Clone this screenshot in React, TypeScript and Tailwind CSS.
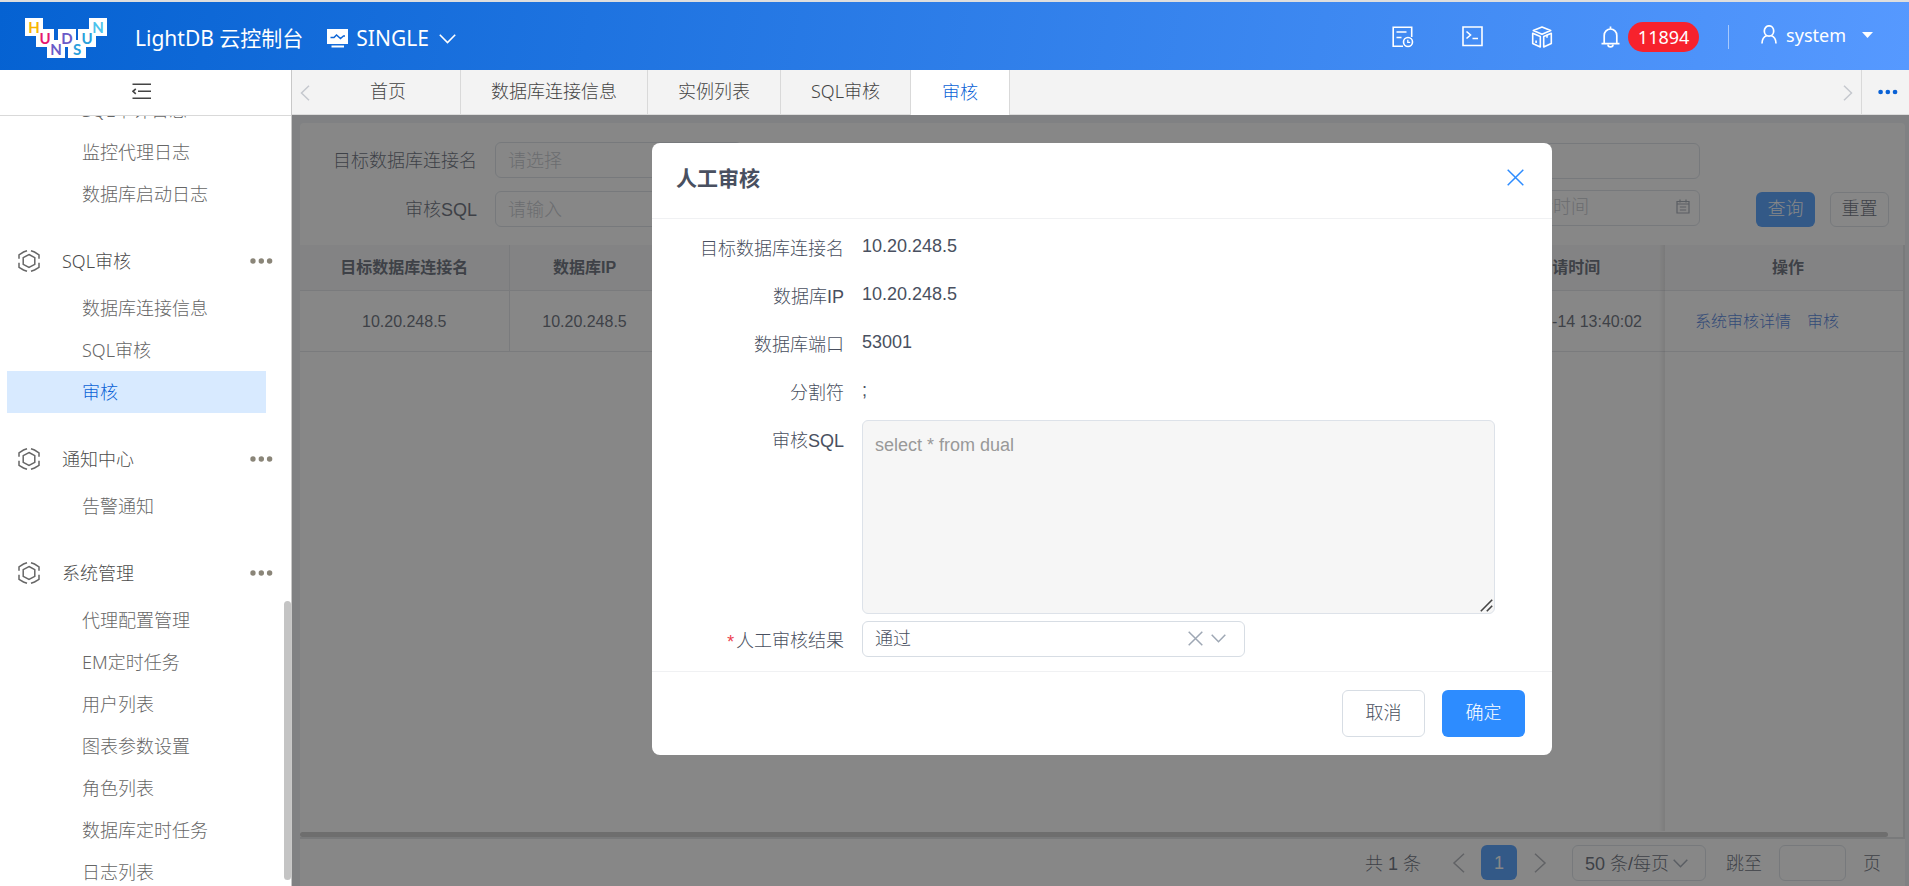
import { useState } from 'react'

const menuGroups = [
  {
    title: '',
    items: ['SQL审计日志', '监控代理日志', '数据库启动日志'],
  },
  {
    title: 'SQL审核',
    items: ['数据库连接信息', 'SQL审核', '审核'],
  },
  {
    title: '通知中心',
    items: ['告警通知'],
  },
  {
    title: '系统管理',
    items: ['代理配置管理', 'EM定时任务', '用户列表', '图表参数设置', '角色列表', '数据库定时任务', '日志列表'],
  },
]

const tabs = ['数据库连接信息', '实例列表', 'SQL审核']

const details = [
  { label: '目标数据库连接名', value: '10.20.248.5' },
  { label: '数据库IP', value: '10.20.248.5' },
  { label: '数据库端口', value: '53001' },
  { label: '分割符', value: ';' },
]

const logoTiles = [
  { x: 0, y: 0, letter: 'H', color: '#f7b500' },
  { x: 11, y: 11, letter: 'U', color: '#e6186e' },
  { x: 22, y: 22, letter: 'N', color: '#6a5ac8' },
  { x: 33, y: 11, letter: 'D', color: '#6a5ac8' },
  { x: 43, y: 22, letter: 'S', color: '#2aa0dc' },
  { x: 53, y: 11, letter: 'U', color: '#2aa0dc' },
  { x: 64, y: 0, letter: 'N', color: '#4cc3ec' },
]

const Logo = () => (
  <svg width="82" height="40" viewBox="0 0 82 40" role="img" aria-label="HUNDSUN">
    {logoTiles.map((tile) => (
      <rect key={tile.x} x={tile.x} y={tile.y} width="18" height="18" fill="#fff" />
    ))}
    {logoTiles.map((tile) => (
      <text
        key={tile.x}
        x={tile.x + 9}
        y={tile.y + 15}
        textAnchor="middle"
        fontSize="15"
        fontWeight="700"
        fontFamily="Lato, sans-serif"
        fill={tile.color}
      >
        {tile.letter}
      </text>
    ))}
  </svg>
)

const MonitorIcon = () => (
  <svg width="21" height="19" viewBox="0 0 21 19" fill="none">
    <path d="M0 0h21v15H0z" fill="#fff" />
    <path d="M3.500 8.500h3.500l2.500-2.500 4 3.500 3-2.500h1.500" stroke="#0f66d6" strokeWidth="1.500" />
    <path d="M4.500 17.500h12.500" stroke="#fff" strokeWidth="2" />
  </svg>
)

const AuditIcon = () => (
  <svg width="22" height="22" viewBox="0 0 22 22" fill="none" stroke="#fff" strokeWidth="1.600">
    <path d="M11 20.200H1.200V1.200h18.500V11" />
    <path d="M4.500 6h10M4.500 11.500h5" />
    <circle cx="16" cy="16" r="4.500" />
    <path d="M15.800 13.800v2.500h2.400" strokeWidth="1.300" />
  </svg>
)

const TerminalIcon = () => (
  <svg width="21" height="21" viewBox="0 0 21 21" fill="none" stroke="#fff" strokeWidth="1.600">
    <path d="M1 1h19v18.500H1z" />
    <path d="M4.500 5.500l4 3.500-4 3.500M10.500 12.500h5.500" />
  </svg>
)

const CubeIcon = () => (
  <svg width="22" height="22" viewBox="0 0 21 22" fill="none" stroke="#fff" strokeWidth="1.600" strokeLinejoin="round">
    <path d="M10.500 1l8.700 3.600-8.700 3.700-8.700-3.700z" />
    <path d="M1.200 7.200l7.600 3.300V21l-7.600-3.500zM19.800 7.200l-7.600 3.300V21l7.600-3.500z" />
    <path d="M4.600 14.500v2.500M15.500 8.800v3" />
  </svg>
)

const BellIcon = () => (
  <svg width="19" height="22" viewBox="0 0 19 22" fill="none" stroke="#fff" strokeWidth="1.700">
    <path d="M3.200 17.500V9.500a6.300 6.500 0 0 1 12.600 0v8M.5 17.700h18M9.500.5v2.500" />
    <path d="M7 18.500a2.500 2.400 0 0 0 5 0" />
  </svg>
)

const UserIcon = () => (
  <svg width="16" height="19" viewBox="0 0 16 19" fill="none" stroke="#fff" strokeWidth="1.700">
    <ellipse cx="8" cy="6" rx="4.700" ry="5.200" />
    <path d="M1 18.500c0-5 2.200-7 5-8M15 18.500c0-5-2.200-7-5-8" />
  </svg>
)

const GroupIcon = () => (
  <svg width="22" height="22" viewBox="0 0 22 22" fill="none" stroke="#666" strokeWidth="1.500">
    <path d="M11 4.500l5.800 3.200v6.600L11 17.500l-5.800-3.200V7.700z" />
    <path d="M9 .8L5.500 2 1 4.800v4M13 .8L16.500 2 21 4.800v4M1 12.800v4.500l4.500 2.700 3.500 1.200M21 12.800v4.500l-4.500 2.700-3.500 1.200" />
  </svg>
)

const CollapseIcon = () => (
  <svg width="19" height="17" viewBox="0 0 19 17" fill="none" stroke="#444" strokeWidth="1.600">
    <path d="M.5 1.300H19M6 8.300h13M.5 15.300H19M3.800 5.800L1 8.300l2.800 2.500" />
  </svg>
)

const CalendarIcon = () => (
  <svg width="14" height="15" viewBox="0 0 14 15" fill="none" stroke="#8f98a6" strokeWidth="1.200">
    <path d="M1 2.500h12v11.500H1zM1 5h12M4 .5v3M10 .5v3M3.800 8h6.400M3.800 11h6.400" />
  </svg>
)

const ChevronDownIcon = ({ className }: { className?: string }) => (
  <svg width="15" height="9" viewBox="0 0 15 9" fill="none" stroke="currentColor" strokeWidth="1.500" className={className}>
    <path d="M.7.7l6.800 7L14.300.7" />
  </svg>
)

const Dots = ({ className }: { className: string }) => (
  <svg height="6" viewBox="0 0 23 6" className={className}>
    <circle cx="3" cy="3" r="2.700" />
    <circle cx="11.300" cy="3" r="2.700" />
    <circle cx="19.600" cy="3" r="2.700" />
  </svg>
)

const Header = () => (
  <header className="flex h-[70px] shrink-0 items-center border-t-2 border-[#dedede] bg-[linear-gradient(100deg,#0562d2,#5699ff)] pl-[25px] pr-9 pt-[3px] font-normal text-white">
    <Logo />
    <h1 className="ml-7 pt-[2px] text-[21px]">LightDB 云控制台</h1>
    <button type="button" className="ml-6 flex items-center gap-2 pt-[2px] text-[21px]">
      <MonitorIcon />
      SINGLE
      <svg width="17" height="10" viewBox="0 0 17 10" fill="none" stroke="#fff" strokeWidth="1.600" className="ml-[2px]">
        <path d="M.8.8l7.700 7.700L16.200.8" />
      </svg>
    </button>
    <nav className="ml-auto flex items-center pb-[2px]">
      <div className="flex items-center gap-12">
        <button type="button" aria-label="审核日志">
          <AuditIcon />
        </button>
        <button type="button" aria-label="终端">
          <TerminalIcon />
        </button>
        <button type="button" aria-label="组件">
          <CubeIcon />
        </button>
        <button type="button" className="flex items-center gap-2 text-lg">
          <BellIcon />
          <span className="flex h-[30px] w-[71px] items-center justify-center rounded-full bg-[#f7222d]">11894</span>
        </button>
      </div>
      <span className="ml-[29px] h-6 w-px bg-white/50" />
      <button type="button" className="ml-8 flex items-center pb-1 text-lg">
        <UserIcon />
        <span className="ml-[9px] mr-4">system</span>
        <svg width="11" height="6" viewBox="0 0 11 6" fill="#fff">
          <path d="M0 0h11L5.500 6z" />
        </svg>
      </button>
    </nav>
  </header>
)

const Sidebar = () => (
  <aside className="relative flex w-[292px] shrink-0 flex-col border-r border-[#c8c8c8] bg-white">
    <button
      type="button"
      aria-label="收起菜单"
      className="flex h-[46px] w-full shrink-0 items-center justify-center border-b border-[#d9d9d9] pb-[2px] pr-2"
    >
      <CollapseIcon />
    </button>
    <nav className="flex-1 overflow-hidden">
      {/* list is scrolled a little past its first entry */}
      <div className="-mt-[27px]">
        {menuGroups.map((group) => (
          <section key={group.title}>
            {group.title && (
              <div className="flex h-[72px] items-center pl-[18px] pr-[18px] pt-[20px]">
                <GroupIcon />
                <h2 className="ml-[22px] text-lg text-[#4c4c4c]">{group.title}</h2>
                <Dots className="ml-auto w-[23px] fill-[#8a8578]" />
              </div>
            )}
            <ul>
              {group.items.map((item) => (
                <li key={item} className="pl-[7px] pr-[25px]">
                  <a
                    href="#"
                    className={
                      item === '审核'
                        ? 'flex h-[42px] items-center bg-[#d8eaff] pl-[75px] text-lg text-[#0a62d6]'
                        : 'flex h-[42px] items-center pl-[75px] text-lg text-[#666]'
                    }
                  >
                    {item}
                  </a>
                </li>
              ))}
            </ul>
          </section>
        ))}
      </div>
    </nav>
    <span className="absolute bottom-[6px] right-0 h-[279px] w-[7px] rounded-full bg-[#c4c4c4]" />
  </aside>
)

const TabBar = () => (
  <div className="flex h-[45px] shrink-0 border-b border-[#dcdcdc] bg-[#f3f3f3] text-lg text-[#444]">
    <button type="button" aria-label="上一页标签" className="flex w-6 items-center pl-2 pt-[2px]">
      <svg width="10" height="16" viewBox="0 0 10 16" fill="none" stroke="#c5c8ce" strokeWidth="1.500">
        <path d="M9 .8L1.500 8 9 15.200" />
      </svg>
    </button>
    <a href="#" className="flex items-center border-r border-[#d9d9d9] px-[54px] pb-[2px]">
      首页
    </a>
    {tabs.map((tab) => (
      <a key={tab} href="#" className="flex items-center border-r border-[#d9d9d9] px-[30px] pb-[2px]">
        {tab}
      </a>
    ))}
    <a href="#" className="-mb-px flex items-center border-r border-[#d9d9d9] bg-white px-[31px] pb-[2px] text-[#0a62d6]">
      审核
    </a>
    <button type="button" aria-label="下一页标签" className="ml-auto flex items-center pr-2 pt-[2px]">
      <svg width="10" height="16" viewBox="0 0 10 16" fill="none" stroke="#c5c8ce" strokeWidth="1.500">
        <path d="M1 .8L8.500 8 1 15.200" />
      </svg>
    </button>
    <button
      type="button"
      aria-label="更多"
      className="flex w-[48px] items-center justify-center border-l border-[#d9d9d9] pl-1"
    >
      <Dots className="w-5 fill-[#0a62d6]" />
    </button>
  </div>
)

const SearchForm = () => (
  <form className="flex items-start pl-[20px] pr-4 pt-[19px]">
    <div className="flex w-[422px] flex-col gap-[13px]">
      <div className="flex items-center justify-between">
        <label htmlFor="conn" className="w-[157px] whitespace-nowrap pt-[2px] text-right">
          目标数据库连接名
        </label>
        <input
          id="conn"
          placeholder="请选择"
          className="h-9 w-[247px] rounded-md border border-[#d7dde4] px-3 pt-[2px] placeholder:text-[#b9bdc5]"
        />
      </div>
      <div className="flex items-center justify-between">
        <label htmlFor="sql" className="w-[157px] pt-[2px] text-right">
          审核SQL
        </label>
        <input
          id="sql"
          placeholder="请输入"
          className="h-9 w-[247px] rounded-md border border-[#d7dde4] px-3 pt-[2px] placeholder:text-[#b9bdc5]"
        />
      </div>
    </div>
    <div className="ml-auto flex w-[250px] flex-col gap-[11px]">
      <input aria-label="数据库IP" className="mt-px h-9 rounded-md border border-[#d7dde4] px-3" />
      <div className="relative">
        <input
          aria-label="申请时间"
          placeholder="请选择申请时间"
          className="h-9 w-full rounded-md border border-[#d7dde4] px-3 pb-[2px] placeholder:text-[#b9bdc5]"
        />
        <span className="absolute right-[10px] top-[9px]">
          <CalendarIcon />
        </span>
      </div>
    </div>
    <div className="ml-14 mt-[50px] flex gap-[15px]">
      <button type="button" className="h-[35px] w-[59px] rounded-md bg-[#2d8cff] pb-[2px] text-white">
        查询
      </button>
      <button type="button" className="h-[35px] w-[59px] rounded-md border border-[#d7dde4] pb-px">
        重置
      </button>
    </div>
  </form>
)

const AuditTable = () => (
  <div className="relative mt-[18px] flex flex-1 flex-col border-b-2 border-r-2 border-[#dcdee2]">
    <table className="w-full table-fixed text-center text-base">
      <colgroup>
        <col className="w-[209px]" />
        <col className="w-[151px]" />
        <col />
        <col className="w-[194px]" />
        <col className="w-[238px]" />
      </colgroup>
      <thead>
        <tr className="h-[45px] border-b border-[#dfe1e6] bg-[#f6f6f7]">
          <th className="border-r border-[#dfe1e6] pt-[2px]">目标数据库连接名</th>
          <th className="border-r border-[#dfe1e6] pt-[2px]">数据库IP</th>
          <th className="border-r border-[#dfe1e6] pt-[2px]">数据库端口</th>
          <th className="pt-[2px]">申请时间</th>
          <th className="pl-2 pt-[2px]">操作</th>
        </tr>
      </thead>
      <tbody>
        <tr className="h-[61px] border-b border-[#dfe1e6]">
          <td className="border-r border-[#dfe1e6] pt-[2px]">10.20.248.5</td>
          <td className="border-r border-[#dfe1e6] pt-[2px]">10.20.248.5</td>
          <td className="border-r border-[#dfe1e6] pt-[2px]">53001</td>
          <td className="whitespace-nowrap pt-[2px]">2022-11-14 13:40:02</td>
          <td className="pt-[2px] text-[#2c69d8]">
            <div className="flex gap-4 pl-[30px]">
              <a href="#">系统审核详情</a>
              <a href="#">审核</a>
            </div>
          </td>
        </tr>
      </tbody>
    </table>
    <div className="mt-auto mr-[15px] h-[5px] rounded-full bg-[#c1c1c1]" />
    {/* edge shadow of the pinned action column */}
    <div className="pointer-events-none absolute bottom-[6px] right-[238px] top-0 w-[6px] bg-linear-to-l from-black/10 to-transparent" />
  </div>
)

const Pagination = () => (
  <footer className="flex h-[47px] items-center justify-end pr-6">
    <span className="pt-[2px]">共 1 条</span>
    <button type="button" aria-label="上一页" className="ml-[31px] text-[#a0a4ab]">
      <svg width="13" height="20" viewBox="0 0 13 20" fill="none" stroke="currentColor" strokeWidth="1.500">
        <path d="M12 .8L2 10l10 9.200" />
      </svg>
    </button>
    <button type="button" className="ml-4 mr-[17px] h-[35px] w-9 rounded-md bg-[#2d8cff] text-white">
      1
    </button>
    <button type="button" aria-label="下一页" className="text-[#a0a4ab]">
      <svg width="13" height="20" viewBox="0 0 13 20" fill="none" stroke="currentColor" strokeWidth="1.500">
        <path d="M1 .8L11 10 1 19.200" />
      </svg>
    </button>
    <div className="relative ml-[25px]">
      <select
        aria-label="每页条数"
        className="h-9 w-[134px] appearance-none rounded-md border border-[#d7dde4] pl-3 pt-[2px]"
      >
        <option>50 条/每页</option>
      </select>
      <ChevronDownIcon className="pointer-events-none absolute right-[18px] top-[14px] text-[#8f98a6]" />
    </div>
    <label htmlFor="jump" className="ml-5 pt-[2px]">
      跳至
    </label>
    <input id="jump" className="mx-[17px] h-9 w-[67px] rounded-md border border-[#d7dde4] px-2" />
    <span className="pt-[2px]">页</span>
  </footer>
)

const AuditDialog = ({ onClose }: { onClose: () => void }) => {
  const [result, setResult] = useState('通过')

  return (
    <div className="absolute inset-0 flex items-start justify-center bg-[rgba(55,55,55,0.6)] pl-[3px] pt-7">
      <div role="dialog" aria-label="人工审核" className="w-[900px] rounded-lg bg-white">
        <div className="flex h-[76px] items-center justify-between border-b border-[#f0f1f3] pb-[6px] pl-6 pr-7">
          <h2 className="pt-[3px] text-[21px] font-bold">人工审核</h2>
          <button type="button" aria-label="关闭" onClick={onClose} className="text-[#2d8cff]">
            <svg width="17" height="17" viewBox="0 0 17 17" fill="none" stroke="currentColor" strokeWidth="1.500">
              <path d="M.7.700l15.600 15.600M16.300.7L.7 16.300" />
            </svg>
          </button>
        </div>
        <form className="pb-[14px] pl-6 pr-[57px] pt-[6px]">
          {details.map((row) => (
            <div key={row.label} className="flex h-12 items-center gap-[18px]">
              <span className="w-[168px] text-right">{row.label}</span>
              <span className="pb-[6px]">{row.value}</span>
            </div>
          ))}
          <div className="flex gap-[18px] pt-[3px]">
            <label htmlFor="audit-sql" className="w-[168px] pt-[7px] text-right">
              审核SQL
            </label>
            <div className="relative flex flex-1">
              <textarea
                id="audit-sql"
                readOnly
                defaultValue="select * from dual"
                className="h-[194px] flex-1 resize-none rounded-md border border-[#dde2e9] bg-[#f6f6f6] px-3 py-[10px] text-[#999]"
              />
              <svg
                width="13"
                height="13"
                viewBox="0 0 13 13"
                fill="none"
                stroke="#444"
                strokeWidth="1.600"
                className="pointer-events-none absolute bottom-[2px] right-[2px]"
              >
                <path d="M.8 12.200L12.200.8M6.800 12.200l5.400-5.400" />
              </svg>
            </div>
          </div>
          <div className="flex gap-[18px] pt-[7px]">
            <label htmlFor="audit-result" className="flex w-[168px] items-center justify-end pt-1">
              <span className="pt-1 font-['Liberation_Mono',monospace] text-[#ed3f4f]">*</span>
              人工审核结果
            </label>
            <div className="relative">
              <select
                id="audit-result"
                value={result}
                onChange={(e) => setResult(e.target.value)}
                className="h-9 w-[383px] appearance-none rounded-md border border-[#d7dde4] px-3 pb-px"
              >
                <option>通过</option>
                <option>不通过</option>
              </select>
              <div className="pointer-events-none absolute right-[19px] top-[10px] flex items-center gap-2 text-[#9ea7b4]">
                <svg width="15" height="15" viewBox="0 0 15 15" fill="none" stroke="currentColor" strokeWidth="1.500">
                  <path d="M.7.700l13.600 13.600M14.300.7L.7 14.300" />
                </svg>
                <ChevronDownIcon />
              </div>
            </div>
          </div>
        </form>
        <div className="flex justify-end gap-[17px] border-t border-[#f0f1f3] pb-[18px] pr-[27px] pt-[18px]">
          <button type="button" onClick={onClose} className="h-[47px] w-[83px] rounded-md border border-[#d7dde4] pb-[2px]">
            取消
          </button>
          <button type="button" onClick={onClose} className="h-[47px] w-[83px] rounded-md bg-[#2d8cff] pb-[2px] text-white">
            确定
          </button>
        </div>
      </div>
    </div>
  )
}

const App = () => {
  const [open, setOpen] = useState(true)

  return (
    <div className="flex h-screen flex-col overflow-hidden font-['Noto_Sans','Noto_Sans_CJK_SC',sans-serif] font-light">
      <Header />
      <div className="flex min-h-0 flex-1">
        <Sidebar />
        <main className="flex min-w-0 flex-1 flex-col">
          <TabBar />
          <div className="relative flex min-h-0 flex-1 bg-[#eef1f5] pl-2 pr-1 pt-2 font-['Liberation_Sans','Noto_Sans_CJK_SC',sans-serif] text-lg text-[#495060]">
            <div className="flex min-w-0 flex-1 flex-col rounded-t bg-white">
              <SearchForm />
              <AuditTable />
              <Pagination />
            </div>
            {open && <AuditDialog onClose={() => setOpen(false)} />}
          </div>
        </main>
      </div>
    </div>
  )
}

export default App
